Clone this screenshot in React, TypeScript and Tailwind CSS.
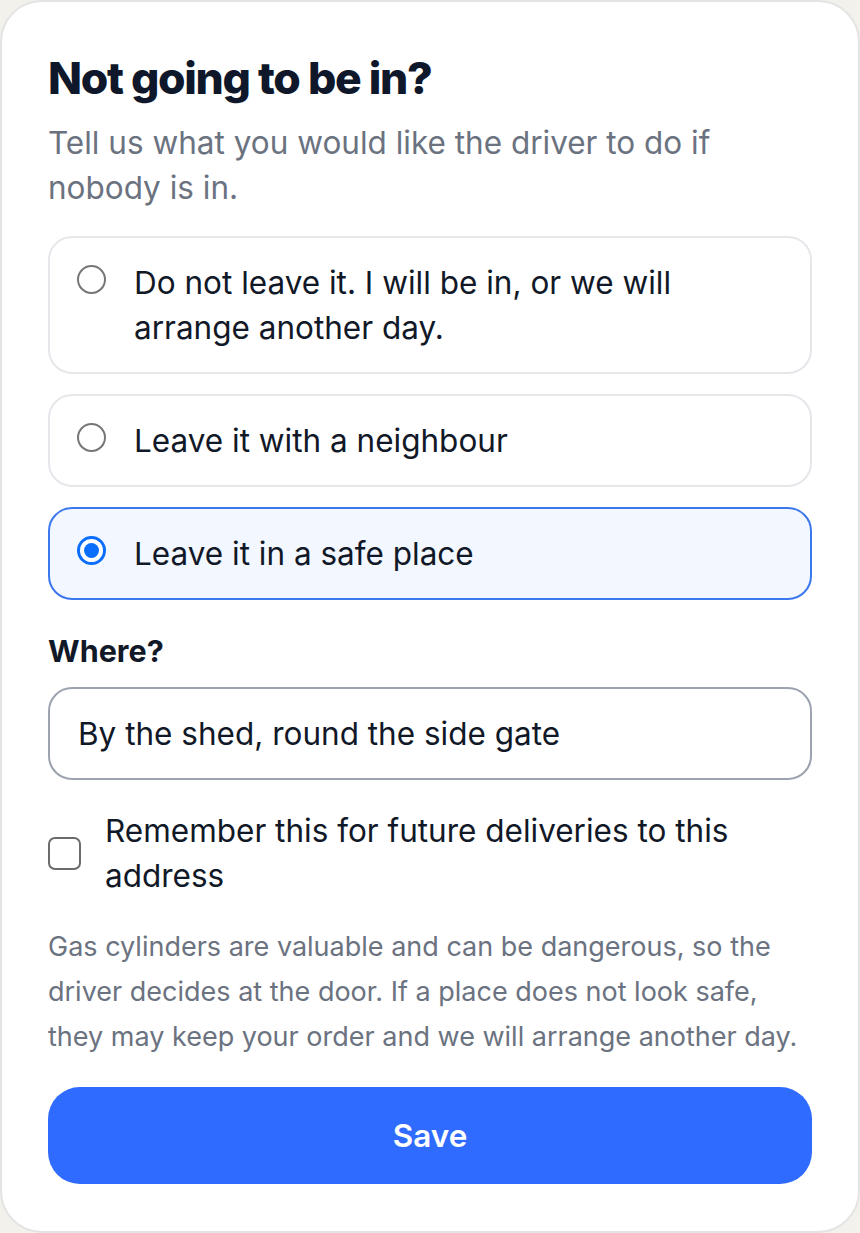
import React, { useState } from 'react';

type Choice = 'keep' | 'neighbour' | 'safe';

const OPTIONS: { id: Choice; label: string }[] = [
  { id: 'keep', label: 'Do not leave it. I will be in, or we will arrange another day.' },
  { id: 'neighbour', label: 'Leave it with a neighbour' },
  { id: 'safe', label: 'Leave it in a safe place' },
];

const Radio: React.FC<{ checked: boolean }> = ({ checked }) =>
  checked ? (
    <span className="mt-[5px] flex h-[29px] w-[29px] shrink-0 items-center justify-center rounded-full border-[3px] border-[#0b6efd] bg-white">
      <span className="h-[15px] w-[15px] rounded-full bg-[#0b6efd]" />
    </span>
  ) : (
    <span className="mt-[5px] h-[29px] w-[29px] shrink-0 rounded-full border-[2.5px] border-[#767676] bg-white" />
  );

export default function App() {
  const [choice, setChoice] = useState<Choice>('safe');
  const [where, setWhere] = useState('By the shed, round the side gate');
  const [remember, setRemember] = useState(false);

  return (
    <div className="min-h-screen bg-[#f3f1ec] font-['Inter','Noto_Sans',sans-serif]">
      <div className="box-border flex h-[1233px] w-[860px] flex-col rounded-[42px] border-2 border-[#e4e4e4] bg-white px-[46px] pt-[48px]">
        <h1 className="text-[44.5px] font-extrabold leading-[56px] tracking-[-0.03em] text-[#0f172a]">
          Not going to be in?
        </h1>
        <p className="mt-[14px] text-[31.5px] leading-[45px] text-[#6b7280]">
          Tell us what you would like the driver to do if nobody is in.
        </p>

        {/* Opcje dostawy */}
        <div className="mt-[26px] flex flex-col gap-[20px]">
          {OPTIONS.map((opt) => {
            const active = choice === opt.id;
            return (
              <button
                key={opt.id}
                type="button"
                onClick={() => setChoice(opt.id)}
                className={
                  active
                    ? 'flex items-start gap-[28px] rounded-[24px] border-2 border-[#3b78ee] bg-[#f3f7ff] py-[22px] pl-[27px] pr-[40px] text-left'
                    : 'flex items-start gap-[28px] rounded-[24px] border-2 border-[#e5e7eb] bg-white py-[22px] pl-[27px] pr-[40px] text-left'
                }
              >
                <Radio checked={active} />
                <span className="text-[31.5px] leading-[45px] text-[#111827]">{opt.label}</span>
              </button>
            );
          })}
        </div>

        <label className="mt-[31px] text-[30.5px] font-bold leading-[40px] text-[#111827]">Where?</label>
        <input
          value={where}
          onChange={(e) => setWhere(e.target.value)}
          className="mt-[16px] h-[93px] w-full rounded-[24px] border-2 border-[#9ca3af] bg-white px-[28px] text-[31.5px] text-[#111827] outline-none"
        />

        <label className="mt-[28px] flex cursor-pointer items-center gap-[24px]">
          <span
            onClick={() => setRemember(!remember)}
            className="h-[33px] w-[33px] shrink-0 rounded-[7px] border-[2.5px] border-[#6b6b6b] bg-white"
          />
          <span className="text-[31.5px] leading-[45px] text-[#111827]">
            Remember this for future deliveries to this address
          </span>
        </label>

        <p className="mt-[26px] text-[27px] leading-[45px] text-[#6b7280]">
          Gas cylinders are valuable and can be dangerous, so the driver decides at the door. If a place does not
          look safe, they may keep your order and we will arrange another day.
        </p>

        <button
          type="button"
          className="mt-[28px] h-[97px] w-full rounded-[32px] bg-[#2f6bff] text-[31.5px] font-semibold text-white"
        >
          Save
        </button>
      </div>
    </div>
  );
}
